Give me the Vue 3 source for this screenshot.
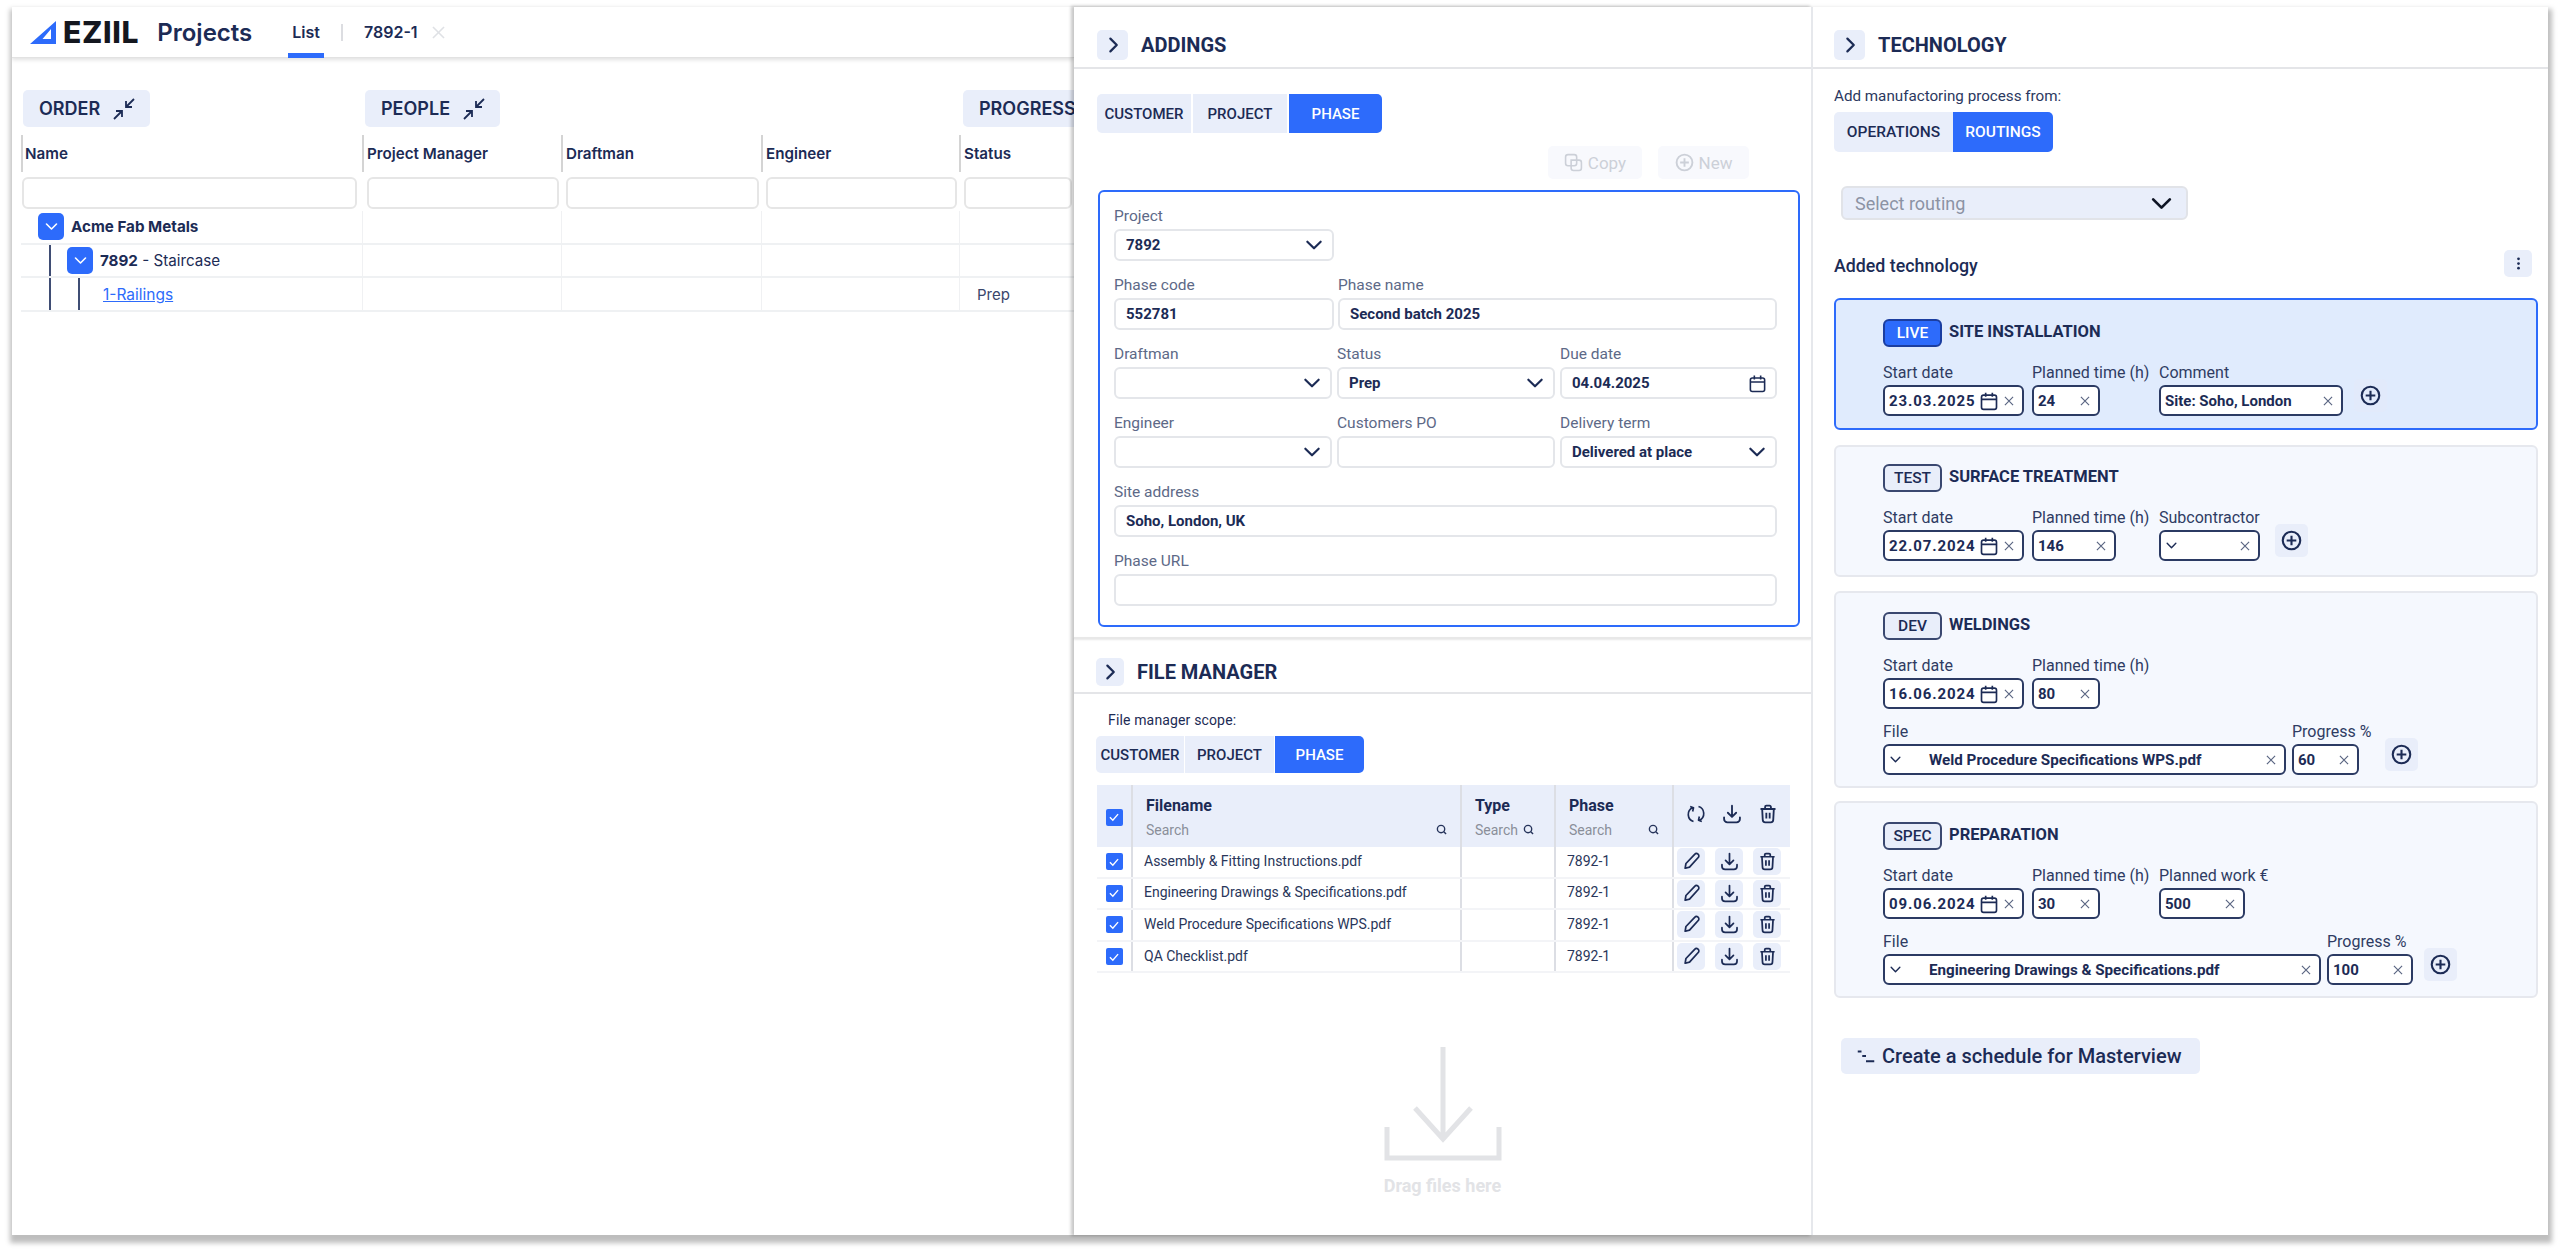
<script setup>
const formRows = [
  { cls: 'r-project', fields: [{ label: 'Project', value: '7892', kind: 'select', w: 220 }] },
  { cls: 'r-code', fields: [
    { label: 'Phase code', value: '552781', w: 220 },
    { label: 'Phase name', value: 'Second batch 2025', w: 439 },
  ] },
  { cls: 'r-three', fields: [
    { label: 'Draftman', value: '', kind: 'select', w: 218 },
    { label: 'Status', value: 'Prep', kind: 'select', w: 218 },
    { label: 'Due date', value: '04.04.2025', kind: 'date', w: 217 },
  ] },
  { cls: 'r-three', fields: [
    { label: 'Engineer', value: '', kind: 'select', w: 218 },
    { label: 'Customers PO', value: '', w: 218 },
    { label: 'Delivery term', value: 'Delivered at place', kind: 'select', w: 217 },
  ] },
  { cls: 'r-one', fields: [{ label: 'Site address', value: 'Soho, London, UK', w: 663 }] },
  { cls: 'r-one', fields: [{ label: 'Phase URL', value: '', w: 663 }] },
]

const files = [
  'Assembly & Fitting Instructions.pdf',
  'Engineering Drawings & Specifications.pdf',
  'Weld Procedure Specifications WPS.pdf',
  'QA Checklist.pdf',
]

const cards = [
  {
    badge: 'LIVE', title: 'SITE INSTALLATION', cls: 'live',
    rows: [{ plus: 11, fields: [
      { label: 'Start date', value: '23.03.2025', kind: 'date', w: 141, fw: 141 },
      { label: 'Planned time (h)', value: '24', w: 68, fw: 119 },
      { label: 'Comment', value: 'Site: Soho, London', w: 184, fw: 184 },
    ] }],
  },
  {
    badge: 'TEST', title: 'SURFACE TREATMENT', cls: 'tight',
    rows: [{ plus: 15, fields: [
      { label: 'Start date', value: '22.07.2024', kind: 'date', w: 141, fw: 141 },
      { label: 'Planned time (h)', value: '146', w: 84, fw: 119 },
      { label: 'Subcontractor', value: '', kind: 'pick', w: 101, fw: 101 },
    ] }],
  },
  {
    badge: 'DEV', title: 'WELDINGS', cls: 'tall',
    rows: [
      { fields: [
        { label: 'Start date', value: '16.06.2024', kind: 'date', w: 141, fw: 141 },
        { label: 'Planned time (h)', value: '80', w: 68, fw: 119 },
      ] },
      { plus: 26, narrow: true, fields: [
        { label: 'File', value: 'Weld Procedure Specifications WPS.pdf', kind: 'pick', w: 403, fw: 403 },
        { label: 'Progress %', value: '60', w: 67, fw: 67 },
      ] },
    ],
  },
  {
    badge: 'SPEC', title: 'PREPARATION', cls: 'tall last',
    rows: [
      { fields: [
        { label: 'Start date', value: '09.06.2024', kind: 'date', w: 141, fw: 141 },
        { label: 'Planned time (h)', value: '30', w: 68, fw: 119 },
        { label: 'Planned work €', value: '500', w: 86, fw: 120 },
      ] },
      { plus: 11, narrow: true, fields: [
        { label: 'File', value: 'Engineering Drawings & Specifications.pdf', kind: 'pick', w: 438, fw: 438 },
        { label: 'Progress %', value: '100', w: 86, fw: 86 },
      ] },
    ],
  },
]
</script>

<template>
  <svg class="defs" aria-hidden="true">
    <symbol id="i-inward" viewBox="0 0 24 24"><path d="M22 2l-8 8M14 4v6h6M2 22l8-8M4 14h6v6" fill="none" stroke="currentColor" stroke-width="1.800"/></symbol>
    <symbol id="i-right" viewBox="0 0 24 24"><path d="M8.500 3.500l8.500 8.500-8.500 8.500" fill="none" stroke="currentColor" stroke-width="3" stroke-linecap="round" stroke-linejoin="round"/></symbol>
    <symbol id="i-down" viewBox="0 0 24 24"><path d="M4 8l8 8 8-8" fill="none" stroke="currentColor" stroke-width="2.600" stroke-linecap="round" stroke-linejoin="round"/></symbol>
    <symbol id="i-cal" viewBox="0 0 24 24"><rect x="3" y="5" width="18" height="17" rx="2.500" fill="none" stroke="currentColor" stroke-width="2"/><path d="M3 10h18M8 2v5M16 2v5" fill="none" stroke="currentColor" stroke-width="2"/></symbol>
    <symbol id="i-x" viewBox="0 0 24 24"><path d="M5 5l14 14M19 5L5 19" fill="none" stroke="currentColor" stroke-width="2"/></symbol>
    <symbol id="i-plus" viewBox="0 0 24 24"><circle cx="12" cy="12" r="10" fill="none" stroke="currentColor" stroke-width="2.400"/><path d="M12 6.500v11M6.500 12h11" fill="none" stroke="currentColor" stroke-width="2.400"/></symbol>
    <symbol id="i-copy" viewBox="0 0 24 24"><rect x="2" y="2" width="14" height="14" rx="3" fill="none" stroke="currentColor" stroke-width="2"/><path d="M9 9h10a3 3 0 0 1 3 3v7a3 3 0 0 1-3 3h-7a3 3 0 0 1-3-3z" fill="none" stroke="currentColor" stroke-width="2"/></symbol>
    <symbol id="i-search" viewBox="0 0 24 24"><circle cx="11" cy="11" r="8" fill="none" stroke="currentColor" stroke-width="3"/><path d="M17 17l5 5" fill="none" stroke="currentColor" stroke-width="3"/></symbol>
    <symbol id="i-sync" viewBox="0 0 24 24"><path d="M8 4.500A8.800 8.800 0 0 0 9 21M16 19.500A8.800 8.800 0 0 0 15 3M5 3l4 1.500L8 9M19 21l-4-1.500L16 15" fill="none" stroke="currentColor" stroke-width="2" stroke-linejoin="round"/></symbol>
    <symbol id="i-dl" viewBox="0 0 24 24"><path d="M12 2v13M7 10.500l5 5 5-5M2.500 16v2a4 4 0 0 0 4 4h11a4 4 0 0 0 4-4v-2" fill="none" stroke="currentColor" stroke-width="2.200" stroke-linecap="round" stroke-linejoin="round"/></symbol>
    <symbol id="i-trash" viewBox="0 0 24 24"><path d="M3 6h18M8.500 6V3.500a1.500 1.500 0 0 1 1.500-1.500h4a1.500 1.500 0 0 1 1.500 1.500V6M5 6l.7 13a3 3 0 0 0 3 3h6.600a3 3 0 0 0 3-3L19 6M10 10.500v7M14 10.500v7" fill="none" stroke="currentColor" stroke-width="2.200"/></symbol>
    <symbol id="i-pen" viewBox="0 0 24 24"><path d="M4 20.500l1-6L16 3a2.800 2.800 0 0 1 4.500 4L9.500 19z M4 20.500l2-.5" fill="none" stroke="currentColor" stroke-width="2.200" stroke-linejoin="round"/></symbol>
    <symbol id="i-dots" viewBox="0 0 24 24"><circle cx="12" cy="4.500" r="2.200" fill="currentColor"/><circle cx="12" cy="12" r="2.200" fill="currentColor"/><circle cx="12" cy="19.500" r="2.200" fill="currentColor"/></symbol>
    <symbol id="i-steps" viewBox="0 0 24 24"><path d="M1 6h5M7 12h5M12 19h11" fill="none" stroke="currentColor" stroke-width="2.400"/></symbol>
    <symbol id="i-check" viewBox="0 0 24 24"><path d="M5 12.500l5 5L19 7" fill="none" stroke="currentColor" stroke-width="2.400"/></symbol>
  </svg>

  <div class="page">
    <div class="window">
      <section class="left">
        <header class="topbar">
          <svg class="logo-mark" viewBox="0 0 26 23">
            <path d="M0 23L26 0v23zM12.500 18h8.500V8z" fill="#2d6bfb" fill-rule="evenodd"/>
          </svg>
          <span class="logo-text">EZIIL</span>
          <span class="page-title">Projects</span>
          <span class="tab active">List</span>
          <span class="tab-sep"></span>
          <span class="tab">7892-1</span>
          <svg class="tab-x"><use href="#i-x"/></svg>
        </header>

        <div class="cols groups">
          <div class="group g-order"><span>ORDER</span><svg><use href="#i-inward"/></svg></div>
          <div class="group g-people"><span>PEOPLE</span><svg><use href="#i-inward"/></svg></div>
          <div class="group g-progress"><span>PROGRESS</span></div>
        </div>

        <div class="cols heads">
          <div class="head">Name</div>
          <div class="head">Project Manager</div>
          <div class="head">Draftman</div>
          <div class="head">Engineer</div>
          <div class="head">Status</div>
        </div>

        <div class="cols filters">
          <div class="filter first"></div>
          <div class="filter"></div>
          <div class="filter"></div>
          <div class="filter"></div>
          <div class="filter"></div>
        </div>

        <div class="cols row">
          <div class="cell name lv1">
            <span class="tree-btn"><svg><use href="#i-down"/></svg></span>
            <b class="tree-text">Acme Fab Metals</b>
          </div>
          <div class="cell"></div><div class="cell"></div><div class="cell"></div><div class="cell"></div>
        </div>
        <div class="cols row">
          <div class="cell name">
            <span class="tree-line l1"></span>
            <span class="tree-btn b2"><svg><use href="#i-down"/></svg></span>
            <span class="tree-text"><b>7892</b> - Staircase</span>
          </div>
          <div class="cell"></div><div class="cell"></div><div class="cell"></div><div class="cell"></div>
        </div>
        <div class="cols row">
          <div class="cell name">
            <span class="tree-line l1"></span>
            <span class="tree-line l2"></span>
            <a class="tree-link">1-Railings</a>
          </div>
          <div class="cell"></div><div class="cell"></div><div class="cell"></div>
          <div class="cell status">Prep</div>
        </div>
      </section>

      <section class="panel addings">
        <header class="panel-head">
          <span class="back"><svg><use href="#i-right"/></svg></span>
          <h2>ADDINGS</h2>
        </header>
        <div class="seg seg-a">
          <span>CUSTOMER</span><span>PROJECT</span><span class="on">PHASE</span>
        </div>
        <div class="actions">
          <span class="ghost g-copy"><svg><use href="#i-copy"/></svg>Copy</span>
          <span class="ghost g-new"><svg><use href="#i-plus"/></svg>New</span>
        </div>
        <form class="form">
          <div v-for="(r, i) in formRows" :key="i" class="form-row" :class="r.cls">
            <label v-for="f in r.fields" :key="f.label" class="fld" :style="{ width: f.w + 'px' }">
              <span class="lbl">{{ f.label }}</span>
              <span class="inp">
                <span class="val">{{ f.value }}</span>
                <svg v-if="f.kind === 'select'" class="chev"><use href="#i-down"/></svg>
                <svg v-if="f.kind === 'date'" class="cal"><use href="#i-cal"/></svg>
              </span>
            </label>
          </div>
        </form>

        <div class="fm-divider"></div>
        <header class="panel-head fm-head">
          <span class="back"><svg><use href="#i-right"/></svg></span>
          <h2>FILE MANAGER</h2>
        </header>
        <p class="scope">File manager scope:</p>
        <div class="seg seg-f">
          <span>CUSTOMER</span><span>PROJECT</span><span class="on">PHASE</span>
        </div>

        <div class="ftable">
          <div class="fhead">
            <div class="fc fc-check"><span class="cb"><svg><use href="#i-check"/></svg></span></div>
            <div class="fc fc-h fc-name"><b>Filename</b><span class="srch">Search<svg><use href="#i-search"/></svg></span></div>
            <div class="fc fc-h fc-type"><b>Type</b><span class="srch">Search<svg><use href="#i-search"/></svg></span></div>
            <div class="fc fc-h fc-phase"><b>Phase</b><span class="srch">Search<svg><use href="#i-search"/></svg></span></div>
            <div class="fc fc-tools">
              <svg><use href="#i-sync"/></svg>
              <svg><use href="#i-dl"/></svg>
              <svg><use href="#i-trash"/></svg>
            </div>
          </div>
          <div v-for="f in files" :key="f" class="frow">
            <div class="fc fc-check"><span class="cb"><svg><use href="#i-check"/></svg></span></div>
            <div class="fc fc-file">{{ f }}</div>
            <div class="fc"></div>
            <div class="fc fc-ph">7892-1</div>
            <div class="fc fc-btns">
              <span class="tool"><svg><use href="#i-pen"/></svg></span>
              <span class="tool"><svg><use href="#i-dl"/></svg></span>
              <span class="tool"><svg><use href="#i-trash"/></svg></span>
            </div>
          </div>
        </div>

        <div class="drop">
          <svg viewBox="0 0 118 116">
            <path d="M59 2v90M31 63l28 31 28-31M3 82v31h112V82" fill="none" stroke="#e2e3e6" stroke-width="5"/>
          </svg>
          <span>Drag files here</span>
        </div>
      </section>

      <section class="panel tech">
        <header class="panel-head">
          <span class="back"><svg><use href="#i-right"/></svg></span>
          <h2>TECHNOLOGY</h2>
        </header>
        <p class="add-from">Add manufactoring process from:</p>
        <div class="seg seg-t">
          <span>OPERATIONS</span><span class="on">ROUTINGS</span>
        </div>
        <div class="routing">
          <span>Select routing</span>
          <svg><use href="#i-down"/></svg>
        </div>
        <div class="added">
          <span class="added-t">Added technology</span>
          <span class="menu"><svg><use href="#i-dots"/></svg></span>
        </div>

        <div class="cards">
          <article v-for="c in cards" :key="c.title" class="card" :class="c.cls">
            <div class="card-head">
              <span class="badge">{{ c.badge }}</span>
              <h3>{{ c.title }}</h3>
            </div>
            <div v-for="(r, i) in c.rows" :key="i" class="card-row" :class="{ narrow: r.narrow }">
              <div v-for="f in r.fields" :key="f.label" class="cf" :style="{ width: f.fw + 'px' }">
                <span class="cl">{{ f.label }}</span>
                <span class="ci" :class="f.kind" :style="{ width: f.w + 'px' }">
                  <svg v-if="f.kind === 'pick'" class="ci-chev"><use href="#i-down"/></svg>
                  <span class="cv" :class="{ wide: f.kind === 'pick' && f.value }">{{ f.value }}</span>
                  <svg v-if="f.kind === 'date'" class="ci-cal"><use href="#i-cal"/></svg>
                  <svg class="ci-x"><use href="#i-x"/></svg>
                </span>
              </div>
              <span v-if="r.plus" class="plus" :style="{ marginLeft: r.plus + 'px' }"><svg><use href="#i-plus"/></svg></span>
            </div>
          </article>
        </div>

        <div class="schedule">
          <svg><use href="#i-steps"/></svg>
          <span>Create a schedule for Masterview</span>
        </div>
      </section>
    </div>
  </div>
</template>

<style>
html, body { margin: 0; background: #fff; }
</style>

<style scoped>
.defs { position: absolute; width: 0; height: 0; }
.page {
  box-sizing: border-box;
  width: 2560px;
  height: 1253px;
  padding: 7px 12px 18px;
  overflow: hidden;
  background: #fff;
}
.window {
  display: flex;
  height: 1228px;
  background: #fff;
  box-shadow: 1px 5px 5px 3px rgba(0, 0, 0, .26);
  color: #1c2b55;
}

/* left list */
.left {
  flex: none;
  width: 1062px;
  overflow: hidden;
  font-family: Inter, sans-serif;
}
.topbar {
  display: flex;
  align-items: center;
  box-sizing: border-box;
  height: 51px;
  padding-left: 18px;
  border-bottom: 1px solid #e2e2e2;
  box-shadow: 0 2px 4px rgba(0, 0, 0, .12);
}
.logo-mark { width: 26px; height: 23px; flex: none; }
.logo-text {
  margin-left: 7px;
  font-size: 30px;
  font-weight: 800;
  letter-spacing: .7px;
  color: #14171f;
}
.page-title { margin-left: 18px; font-size: 24px; font-weight: 600; }
.tab {
  position: relative;
  align-self: stretch;
  display: flex;
  align-items: center;
  font-size: 16px;
  font-weight: 600;
}
.tab.active { margin-left: 40px; }
.tab.active::after {
  content: "";
  position: absolute;
  left: -4px;
  right: -4px;
  bottom: -1px;
  height: 5px;
  background: #2d6bfb;
}
.tab-sep { width: 2px; height: 17px; margin: 0 21px; background: #dcdde1; }
.tab-x { width: 19px; height: 19px; margin-left: 11px; color: #dfe1e5; }

.cols {
  display: grid;
  grid-template-columns: 341px 199px 200px 198px 1fr;
  padding-left: 9px;
}
.groups { margin-top: 32px; height: 37px; }
.group {
  display: flex;
  align-items: center;
  box-sizing: border-box;
  height: 37px;
  padding-left: 16px;
  background: #e9eefa;
  border-radius: 5px;
  font-size: 18px;
  font-weight: 600;
}
.group svg { width: 24px; height: 24px; margin-left: 12px; flex: none; }
.g-order { grid-column: 1; width: 127px; margin-left: 2px; }
.g-people { grid-column: 2 / span 3; width: 135px; margin-left: 3px; }
.g-progress { grid-column: 5; width: 140px; margin-left: 4px; }

.heads { margin-top: 8px; height: 37px; }
.head {
  display: flex;
  align-items: center;
  padding-left: 3px;
  border-left: 2px solid #d4d4d4;
  font-size: 15.200px;
  font-weight: 600;
}
.head:first-child { padding-left: 2px; }
.filters { margin-top: 5px; height: 32px; }
.filter {
  margin: 0 2px 0 5px;
  background: #fff;
  border: 2px solid #e6e6e6;
  border-radius: 6px;
}
.filter.first { margin: 0 5px 0 1px; }
.row {
  box-sizing: border-box;
  height: 33.500px;
  margin-left: 9px;
  padding-left: 0;
  border-bottom: 2px solid #eff1f3;
}
.filters + .row { margin-top: 2px; }
.cell {
  display: flex;
  align-items: center;
  border-left: 1px solid #f0f1f3;
  font-size: 15px;
}
.cell:first-child { border-left: 0; }
.name { align-items: stretch; padding-left: 28px; }
.name.lv1 { padding-left: 17px; }
.tree-btn {
  display: flex;
  align-items: center;
  justify-content: center;
  width: 26px;
  height: 27px;
  align-self: center;
  background: #2d6bfb;
  border-radius: 5px;
  color: #fff;
}
.tree-btn svg { width: 15px; height: 15px; }
.tree-btn.b2 { margin-left: 16px; }
.tree-text { align-self: center; margin-left: 7px; font-size: 15.200px; font-weight: 400; white-space: nowrap; }
b.tree-text, .tree-text b { font-weight: 700; }
.tree-line { width: 2px; background: #3f4d74; flex: none; }
.tree-line.l2 { margin-left: 27px; }
.tree-link {
  align-self: center;
  margin: 2px 0 0 23px;
  color: #2d6bfb;
  font-size: 15.500px;
  text-decoration: underline;
}
.status { padding: 2px 0 0 17px; color: #3a466b; }

/* panels shared */
.panel {
  flex: none;
  box-sizing: border-box;
  width: 737px;
  font-family: Roboto, sans-serif;
  background: #fff;
  position: relative;
}
.addings { padding-left: 23px; box-shadow: -2px 0 3px 1px rgba(0, 0, 0, .22); }
.tech { padding-left: 21px; border-left: 2px solid #e6e8ec; }
.panel-head {
  display: flex;
  align-items: center;
  box-sizing: border-box;
  height: 62px;
  margin-left: -23px;
  padding: 16px 0 0 23px;
  border-bottom: 2px solid #e4e5e8;
}
.tech .panel-head { margin-left: -21px; padding-left: 21px; }
.panel-head h2 { margin: 0 0 0 13px; font-size: 20px; font-weight: 700; line-height: 1; }
.back {
  display: flex;
  align-items: center;
  justify-content: center;
  width: 31px;
  height: 30px;
  background: #e9eefa;
  border-radius: 5px;
}
.back svg { width: 18px; height: 18px; }

.seg {
  display: grid;
  width: fit-content;
  border-radius: 5px;
  overflow: hidden;
  font-weight: 500;
}
.seg span {
  display: flex;
  align-items: center;
  justify-content: center;
  background: #e9eefa;
}
.seg .on { background: #2d6bfb; color: #fff; }
.seg-a { grid-template-columns: 94px 94px 93px; column-gap: 2px; height: 39px; margin-top: 25px; font-size: 15px; }
.seg-f { grid-template-columns: 88px 89px 89px; column-gap: 1px; height: 37px; margin: 7px 0 0 -1px; font-size: 15px; }
.seg-t { grid-template-columns: 119px 100px; height: 40px; margin-top: 7px; font-size: 15.500px; }

.actions {
  display: flex;
  justify-content: flex-end;
  gap: 16px;
  height: 33px;
  margin-top: 13px;
  padding-right: 62px;
}
.ghost {
  display: flex;
  align-items: center;
  justify-content: center;
  gap: 5px;
  background: #f8f9fd;
  border-radius: 5px;
  color: #ccd0d8;
  font-size: 17px;
}
.ghost svg { width: 19px; height: 19px; }
.g-copy { width: 94px; }
.g-new { width: 91px; }

.form {
  box-sizing: border-box;
  width: 702px;
  height: 437px;
  margin: 11px 0 0 1px;
  padding: 15px 0 0 14px;
  border: 2px solid #2d6bfb;
  border-radius: 6px;
}
.form-row { display: flex; gap: 5px; margin-bottom: 15px; }
.r-code { gap: 4px; }
.fld { display: flex; flex-direction: column; gap: 4px; flex: none; }
.lbl { height: 18px; line-height: 18px; font-size: 15.500px; color: #5d6987; }
.inp {
  display: flex;
  align-items: center;
  justify-content: space-between;
  box-sizing: border-box;
  height: 32px;
  padding: 0 8px 0 10px;
  background: #fff;
  border: 2px solid #e4e6ea;
  border-radius: 6px;
}
.val { font-size: 15px; font-weight: 700; }
.chev { width: 20px; height: 20px; }
.cal { width: 19px; height: 19px; }

.fm-divider {
  height: 2px;
  margin: 10px 0 0 -23px;
  background: #e8e8e8;
  box-shadow: 0 1px 2px rgba(0, 0, 0, .1);
}
.fm-head { height: 55px; padding: 12px 0 0 22px; }
.fm-head .back { width: 28px; height: 28px; }
.fm-head h2 { font-size: 20px; margin-left: 13px; }
.scope { margin: 17px 0 0 11px; font-size: 14px; line-height: 18px; letter-spacing: .15px; }

.ftable { width: 693px; margin-top: 12px; }
.fhead, .frow {
  display: grid;
  grid-template-columns: 34px 329px 94px 118px 118px;
}
.fhead { height: 62px; background: #e9eefa; }
.frow { height: 31.600px; box-sizing: border-box; border-bottom: 2px solid #f3f4f7; }
.fc { box-sizing: border-box; border-left: 2px solid #dcdee4; min-width: 0; }
.fc-check {
  display: flex;
  align-items: center;
  justify-content: center;
  border-left: 0;
}
.fhead .fc-check { padding-top: 2px; }
.cb {
  display: flex;
  align-items: center;
  justify-content: center;
  width: 17px;
  height: 17px;
  background: #2d6bfb;
  border-radius: 2px;
  color: #fff;
}
.cb svg { width: 14px; height: 14px; }
.fc-h {
  display: flex;
  flex-direction: column;
  justify-content: center;
  gap: 7px;
  padding-top: 2px;
}
.fc-h b { font-size: 16px; font-weight: 700; line-height: 18px; }
.srch {
  display: flex;
  align-items: center;
  justify-content: space-between;
  font-size: 14px;
  line-height: 16px;
  color: #8a8e99;
}
.srch svg { width: 11px; height: 11px; color: #26345b; }
.fc-name { padding-left: 13px; padding-right: 13px; }
.fc-type { padding-left: 13px; padding-right: 20px; }
.fc-phase { padding-left: 13px; padding-right: 13px; }
.fc-tools {
  display: grid;
  grid-template-columns: 20px 20px 20px;
  justify-content: center;
  align-items: center;
  column-gap: 16px;
}
.fc-tools svg { width: 20px; height: 20px; margin-top: -4px; }
.fc-file, .fc-ph {
  display: flex;
  align-items: center;
  padding-bottom: 2px;
  padding-left: 11px;
  font-size: 14px;
  color: #29365a;
  white-space: nowrap;
}
.fc-btns {
  display: grid;
  grid-template-columns: 28px 28px 28px;
  column-gap: 10px;
  align-items: center;
  padding-left: 3px;
}
.tool {
  display: flex;
  align-items: center;
  justify-content: center;
  height: 27px;
  background: #e9eefa;
  border-radius: 5px;
}
.tool svg { width: 19px; height: 19px; }

.drop {
  display: flex;
  flex-direction: column;
  align-items: center;
  margin: 72px 0 0 -23px;
}
.drop svg { width: 118px; height: 116px; }
.drop span {
  margin-top: 14px;
  font-size: 18px;
  font-weight: 700;
  color: #e2e3e6;
}

/* technology */
.add-from { margin: 18px 0 0; font-size: 15.200px; line-height: 18px; color: #2b3860; }
.routing {
  display: flex;
  align-items: center;
  justify-content: space-between;
  box-sizing: border-box;
  width: 347px;
  height: 34px;
  margin: 34px 0 0 7px;
  padding: 0 12px;
  background: #e9eefa;
  border: 2px solid #e1e3e8;
  border-radius: 6px;
  font-size: 18px;
  color: #8c93a4;
}
.routing svg { width: 25px; height: 25px; color: #0e1424; }
.added {
  display: flex;
  align-items: center;
  justify-content: space-between;
  width: 698px;
  height: 27px;
  margin-top: 30px;
  font-size: 17.800px;
  font-weight: 500;
}
.added-t { padding-top: 4px; }
.menu {
  display: flex;
  align-items: center;
  justify-content: center;
  width: 28px;
  height: 27px;
  background: #e9eefa;
  border-radius: 5px;
}
.menu svg { width: 15px; height: 15px; }

.cards { display: flex; flex-direction: column; gap: 14px; margin-top: 21px; }
.card {
  box-sizing: border-box;
  width: 704px;
  padding: 19px 0 0 47px;
  background: #f5f8fe;
  border: 2px solid #e6e8ee;
  border-radius: 6px;
}
.card.live { height: 132px; background: #e0ebfd; border-color: #2d6bfb; }
.card.tight { height: 132px; margin-top: 1px; padding-top: 17px; }
.card.tall { height: 197px; }
.card.last { margin-top: -1px; }
.card-head { display: flex; align-items: flex-start; height: 28px; gap: 7px; }
.card-head h3 {
  margin: 3px 0 0;
  font-size: 16.500px;
  line-height: 20px;
  font-weight: 700;
}
.badge {
  display: flex;
  align-items: center;
  justify-content: center;
  box-sizing: border-box;
  width: 59px;
  height: 28px;
  background: #e9eefa;
  border: 2px solid #3a4870;
  border-radius: 6px;
  font-size: 15.500px;
  font-weight: 500;
}
.live .badge { background: #2d6bfb; color: #fff; border-color: #1b3ea0; }
.card-row { display: flex; align-items: flex-end; margin-top: 17px; }
.card-row.narrow { margin-top: 14px; }
.cf { display: flex; flex-direction: column; gap: 3px; flex: none; margin-right: 8px; }
.narrow .cf { margin-right: 6px; }
.cf:last-of-type { margin-right: 0; }
.cl { height: 18px; line-height: 18px; font-size: 16px; white-space: nowrap; color: #2f3c63; }
.ci {
  display: flex;
  align-items: center;
  box-sizing: border-box;
  height: 31px;
  padding: 0 5px 0 4px;
  background: #fff;
  border: 2px solid #2b3a63;
  border-radius: 6px;
  color: #1c2b55;
}
.cv { font-size: 15px; font-weight: 700; white-space: nowrap; flex: 1; min-width: 0; overflow: hidden; }
.ci.date .cv { flex: none; letter-spacing: .9px; }
.cv.wide { padding-left: 27px; font-size: 15.200px; }
.ci-cal { width: 20px; height: 20px; margin-left: 3px; flex: none; }
.ci-x { width: 14px; height: 14px; margin-left: auto; margin-right: 1px; flex: none; color: #5a6582; }
.ci-chev { width: 13px; height: 13px; flex: none; }
.plus {
  display: flex;
  align-items: center;
  justify-content: center;
  width: 33px;
  height: 33px;
  margin-bottom: 4px;
  background: #e9eefa;
  border-radius: 5px;
}
.live .plus { background: #e2eafb; }
.plus svg { width: 21px; height: 21px; }

.schedule {
  display: flex;
  align-items: center;
  box-sizing: border-box;
  width: 359px;
  height: 36px;
  margin: 40px 0 0 7px;
  padding-left: 16px;
  background: #e9eefa;
  border-radius: 5px;
  font-size: 20px;
  font-weight: 500;
}
.schedule svg { width: 18px; height: 18px; margin-right: 7px; }
</style>
